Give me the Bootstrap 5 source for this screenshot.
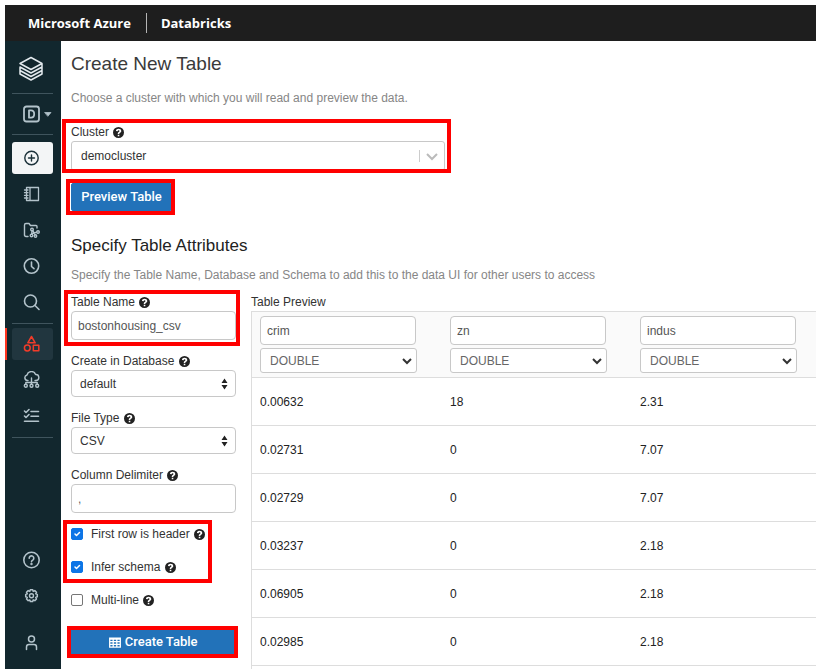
<!DOCTYPE html>
<html lang="en">
<head>
<meta charset="utf-8">
<meta name="viewport" content="width=device-width, initial-scale=1">
<title>Create New Table - Databricks</title>
<link href="https://cdn.jsdelivr.net/npm/bootstrap@5.3.0/dist/css/bootstrap.min.css" rel="stylesheet">
<style>
  body { font-family: "Liberation Sans", Arial, sans-serif; font-size: 12px; line-height: 16px; color: #333; background: #fff; }
  .shell { padding: 5px 5px 3px; }
  .topbar { background: #1e1e1e; height: 36px; padding-left: 23px; font: 700 13px/20px "Open Sans", sans-serif; }
  .topbar a { color: #fff; }
  .topbar .vr { width: 1px; height: 20px; margin: 0 14px 0 15px; opacity: 1; color: #b5b5b5; align-self: center; }

  .rail { width: 56px; background: #12272e; color: #b3c3cb; padding: 8px 7px 10px; gap: 4px; }
  .rail a { color: inherit; height: 32px; width: 41px; padding-right: 2px; border-radius: 3px; flex-shrink: 0; }
  .rail .brand { height: 39px; width: 38px; padding: 0; color: #e3eaee; }
  .rail .persona { height: 31px; padding: 0; }
  .rail .rule { width: 41px; margin: 1px 0 0; border-top: 1px solid #3f545d; opacity: 1; }
  .rail .rule-wide { margin-bottom: 3px; }
  .rail .create { background: #f3f5f6; color: #1b3139; }
  .rail .current { background: #21363f; color: #f23c2a; position: relative; }
  .rail .current::before { content: ""; position: absolute; left: -7px; top: 0; bottom: 0; width: 2px; background: #ff3621; }
  .rail .person { margin-top: 11px; }
  .rail svg { fill: none; stroke: currentColor; stroke-width: 1.4; stroke-linejoin: round; stroke-linecap: round; }

  .page { padding: 11px 0 0 10px; }
  h1 { font-size: 19px; line-height: 24px; font-weight: 400; margin: 0 0 13px; color: #3a3a3a; }
  h2 { font-size: 17px; line-height: 22px; font-weight: 400; margin: 0 0 9px; color: #222; }
  .hint { color: #868686; line-height: 18px; margin: 0; }
  label { display: block; line-height: 16px; margin-bottom: 1px; }
  .q { width: 11px; height: 11px; margin-left: 1px; vertical-align: -2px; fill: #222; }

  .form-control, .form-select { font-size: 12px; line-height: 16px; border-color: #c8c8c8; border-radius: 4px; color: #555; }
  .form-control { height: 29px; padding: 4px 6px; }
  .form-select { height: 27px; padding: 4px 24px 4px 8px; color: #333; background-size: 9px 12px; background-position: right 6px center; }
  .updown { --bs-form-select-bg-img: url("data:image/svg+xml,%3Csvg xmlns='http://www.w3.org/2000/svg' viewBox='0 0 9 12'%3E%3Cpath fill='%23222' d='M4.500 .5 7.500 5h-6zM4.500 11.500 7.500 7h-6z'/%3E%3C/svg%3E"); }
  .cluster { height: 30px; padding: 3px 30px 4px 9px; border-radius: 3px; background-size: 22px 14px; background-position: right 4px center;
    --bs-form-select-bg-img: url("data:image/svg+xml,%3Csvg xmlns='http://www.w3.org/2000/svg' viewBox='0 0 22 14'%3E%3Cpath fill='none' stroke='%23ccc' d='M1.500 1v12'/%3E%3Cpath fill='none' stroke='%23bbb' stroke-width='2' d='m9 5 5 5 5-5'/%3E%3C/svg%3E"); }
  .cluster-field { width: 374px; max-width: 100%; margin-top: 17px; }
  .btn-azure { --bs-btn-bg: #2272b9; --bs-btn-color: #fff; --bs-btn-hover-bg: #1b609e; --bs-btn-hover-color: #fff; --bs-btn-border-color: #2272b9;
    --bs-btn-font-size: 13px; --bs-btn-line-height: 16px; --bs-btn-border-radius: 2px; --bs-btn-font-weight: 500; --bs-btn-padding-y: 5px; --bs-btn-padding-x: 0; --bs-btn-font-family: Roboto, Arial, sans-serif; }
  .preview { margin-top: 12px; width: 101px; }

  .boxed { position: relative; }
  .boxed::after { content: ""; position: absolute; border: 4px solid #f00; pointer-events: none; inset: -4px -4px -6px -7px; }
  .boxed-cluster::after { inset: -5px -6px -2px -9px; }
  .boxed-button::after { inset: -4px -3px -4px -5px; }
  .boxed-checks::after { inset: -6px 24px -8px -8px; }

  .attrs { width: 165px; flex-shrink: 0; gap: 13px; }
  .attrs-row { padding-top: 10px; }
  .checks { gap: 17px; }
  .tick { display: flex; align-items: center; gap: 8px; min-height: 0; margin: 0; padding: 0; }
  .tick .form-check-input { width: 12px; height: 12px; margin: 0; float: none; border-color: #767676; border-radius: 2px; }
  .tick .form-check-input:checked { background-color: #0d75e6; border-color: #0d75e6; }
  .tick label { margin: 0; }
  .make { margin-top: 7px; }
  .make::after { inset: -2px -2px -2px -4px; }

  .grid { min-width: 0; margin-left: 15px; }
  .caption-line { margin-bottom: 1px; }
  .sheet { border-left: 1px solid #ddd; }
  .samples { width: 100%; table-layout: fixed; color: #222; }
  .samples th { width: 190px; font-weight: 400; background: #fafafa; border-top: 1px solid #ddd; padding: 4px 0 4px 8px; }
  .samples th:last-child { width: auto; }
  .samples tr { border-bottom: 1px solid #ddd; }
  .samples td { padding: 16px 0 15px 8px; }
  .samples .form-control { width: 156px; margin-bottom: 3px; }
  .samples .form-select { width: 157px; height: 25px; padding: 3px 20px 3px 9px; color: #666; border-radius: 3px; background-size: 10px 8px; background-position: right 4px center;
    --bs-form-select-bg-img: url("data:image/svg+xml,%3Csvg xmlns='http://www.w3.org/2000/svg' viewBox='0 0 10 8'%3E%3Cpath fill='none' stroke='%23333' stroke-width='2' d='m1 2 4 4 4-4'/%3E%3C/svg%3E"); }
</style>
</head>
<body>
<svg class="d-none" aria-hidden="true">
  <symbol id="q" viewBox="0 0 16 16"><path fill-rule="evenodd" d="M8 0a8 8 0 1 0 0 16A8 8 0 0 0 8 0zM6.900 11.200h2.300v2.200H6.900zM4.300 5.800C4.400 3.700 5.900 2.600 8.100 2.600c2.200 0 3.900 1.200 3.900 3.100 0 1.500-.9 2.200-1.800 2.800-.8.500-1 .8-1 1.700H6.900c0-1.600.5-2.300 1.500-3 .7-.4 1-.7 1-1.300 0-.6-.5-1-1.200-1-.9 0-1.300.4-1.400 1.200z"/></symbol>
</svg>
<div class="shell d-flex flex-column min-vh-100">
  <header class="topbar d-flex align-items-center">
    <a class="text-decoration-none" href="#">Microsoft Azure</a><span class="vr"></span><a class="text-decoration-none" href="#">Databricks</a>
  </header>
  <div class="d-flex flex-grow-1">
    <nav class="rail d-flex flex-column flex-shrink-0" aria-label="Main">
      <a class="brand d-flex align-items-center justify-content-center" href="#" aria-label="Home"><svg width="26" height="26" viewBox="0 0 26 26"><path d="M2 7.500 13 1.500l11 6-11 6zM24 7.500v3.500l-11 6-11-6M2 11v3.500l11 6 11-6M24 14.500V18l-11 6-11-6v-3.500M24 11v3.500" stroke-width="1.500"/></svg></a>
      <hr class="rule">
      <a class="persona d-flex align-items-center justify-content-end" href="#" aria-label="Persona"><svg width="32" height="18" viewBox="0 0 32 18"><rect x="3" y="1.500" width="15" height="15" rx="2.500" stroke-width="1.800"/><path d="M8 5.300h2q3.200 0 3.200 3.700T10 12.700H8z" stroke-width="1.800"/><path d="M24 7.500h6L27 11z" fill="currentColor" stroke-width=".8"/></svg></a>
      <hr class="rule rule-wide">
      <a class="create d-flex align-items-center justify-content-center" href="#" aria-label="Create"><svg width="18" height="18" viewBox="0 0 18 18"><circle cx="8.500" cy="9" r="6.700"/><path d="M8.500 6v6M5.500 9h6"/></svg></a>
      <a class="d-flex align-items-center justify-content-center" href="#" aria-label="Workspace"><svg width="18" height="18" viewBox="0 0 18 18"><path d="M3.500 2.500h12v13h-12zM7 2.500v13M1.500 5h3.500M1.500 7.700h3.500M1.500 10.400h3.500M1.500 13h3.500" stroke-width="1.300"/></svg></a>
      <a class="d-flex align-items-center justify-content-center" href="#" aria-label="Repos"><svg width="18" height="18" viewBox="0 0 18 18"><path d="M5 15.500H3q-1.500 0-1.500-1.500V4q0-1.500 1.500-1.500h3l1.500 2h5.500q1 0 1 1V7"/><circle cx="9" cy="8.500" r="1.300"/><circle cx="15" cy="11" r="1.300"/><circle cx="8.500" cy="14.500" r="1.300"/><circle cx="12.500" cy="15" r="1.200"/><path d="M9 9.800l-.3 3.400M9.800 9.500l2.400 4.300M9.500 12.500l4.200-1.300"/></svg></a>
      <a class="d-flex align-items-center justify-content-center" href="#" aria-label="Recents"><svg width="18" height="18" viewBox="0 0 18 18"><circle cx="8.500" cy="9" r="7.200" stroke-width="1.600"/><path d="M8.500 5v4.500l2.500 2.200" stroke-width="1.600"/></svg></a>
      <a class="d-flex align-items-center justify-content-center" href="#" aria-label="Search"><svg width="18" height="18" viewBox="0 0 18 18"><circle cx="7.500" cy="8" r="6" stroke-width="1.600"/><path d="m12 12.500 4 4" stroke-width="1.600"/></svg></a>
      <hr class="rule">
      <a class="current d-flex align-items-center justify-content-center" href="#" aria-label="Data" aria-current="page"><svg width="18" height="18" viewBox="0 0 18 18"><path d="m8.500 1.500 3.700 6.300H4.800zM10.300 10.300h5.500v5.500h-5.500z" stroke-width="1.500"/><circle cx="4.300" cy="13" r="2.900" stroke-width="1.500"/></svg></a>
      <a class="d-flex align-items-center justify-content-center" href="#" aria-label="Compute"><svg width="18" height="18" viewBox="0 0 18 18"><path d="M5 9.500H4.300a2.800 2.800 0 0 1-.3-5.500A4.500 4.500 0 0 1 12.600 3.500a3 3 0 0 1 .4 6H12M8.500 7v6M2.800 13v-1.500h11.400V13"/><circle cx="2.800" cy="14.800" r="1.500"/><circle cx="8.500" cy="14.800" r="1.500"/><circle cx="14.200" cy="14.800" r="1.500"/></svg></a>
      <a class="d-flex align-items-center justify-content-center" href="#" aria-label="Jobs"><svg width="18" height="18" viewBox="0 0 18 18"><path d="m1.500 4 1.500 1.500L6 2.500M1.500 9 3 10.500 6 7.500M8 4.500h7.500M8 9.300h7.500M1.500 14.200h14" stroke-width="1.600"/></svg></a>
      <hr class="rule">
      <a class="d-flex align-items-center justify-content-center mt-auto" href="#" aria-label="Help"><svg width="18" height="18" viewBox="0 0 18 18"><circle cx="8.500" cy="9" r="7.700" stroke-width="1.600"/><path d="M6.200 7.300a2.300 2.300 0 1 1 3.600 1.800q-1.300.7-1.300 1.700" stroke-width="1.600"/><circle cx="8.500" cy="13" r=".5"/></svg></a>
      <a class="d-flex align-items-center justify-content-center" href="#" aria-label="Settings"><svg width="18" height="18" viewBox="0 0 18 17"><path d="M7.300 2.300h2.400l.5 1.600 1.600-.8 1.700 1.700-.8 1.600 1.600.5v2.400l-1.600.6.8 1.600-1.700 1.700-1.600-.8-.5 1.600H7.300l-.5-1.600-1.600.8-1.700-1.700.8-1.600-1.600-.6V6.900l1.600-.5-.8-1.600 1.700-1.700 1.600.8z" stroke-width="1.500"/><circle cx="8.500" cy="8.200" r="2"/></svg></a>
      <a class="person d-flex align-items-center justify-content-center" href="#" aria-label="Account"><svg width="18" height="18" viewBox="0 0 18 18"><circle cx="8.500" cy="5" r="3" stroke-width="1.500"/><path d="M3.500 15.500V13q0-2.500 2.500-2.500h5q2.500 0 2.500 2.500v2.500" stroke-width="1.500"/></svg></a>
    </nav>
    <main class="page flex-grow-1 overflow-hidden d-flex flex-column">
      <h1>Create New Table</h1>
      <p class="hint">Choose a cluster with which you will read and preview the data.</p>
      <div class="cluster-field boxed boxed-cluster">
        <label for="cluster">Cluster <svg class="q"><use href="#q"/></svg></label>
        <select class="form-select cluster" id="cluster"><option>democluster</option></select>
      </div>
      <div class="preview boxed boxed-button d-flex"><button class="btn btn-azure w-100" type="button">Preview Table</button></div>
      <h2 class="mt-4">Specify Table Attributes</h2>
      <p class="hint">Specify the Table Name, Database and Schema to add this to the data UI for other users to access</p>
      <div class="attrs-row d-flex flex-grow-1">
        <form class="attrs d-flex flex-column">
          <div class="boxed"><label for="tname">Table Name <svg class="q"><use href="#q"/></svg></label><input class="form-control" id="tname" value="bostonhousing_csv"></div>
          <div><label for="db">Create in Database <svg class="q"><use href="#q"/></svg></label><select class="form-select updown" id="db"><option>default</option></select></div>
          <div><label for="ftype">File Type <svg class="q"><use href="#q"/></svg></label><select class="form-select updown" id="ftype"><option>CSV</option></select></div>
          <div><label for="delim">Column Delimiter <svg class="q"><use href="#q"/></svg></label><input class="form-control" id="delim" placeholder=","></div>
          <div class="checks d-flex flex-column">
            <div class="checks d-flex flex-column boxed boxed-checks">
              <div class="tick"><input class="form-check-input" type="checkbox" id="hdr" checked><label for="hdr">First row is header <svg class="q"><use href="#q"/></svg></label></div>
              <div class="tick"><input class="form-check-input" type="checkbox" id="infer" checked><label for="infer">Infer schema <svg class="q"><use href="#q"/></svg></label></div>
            </div>
            <div class="tick"><input class="form-check-input" type="checkbox" id="multi"><label for="multi">Multi-line <svg class="q"><use href="#q"/></svg></label></div>
          </div>
          <div class="make boxed d-flex"><button class="btn btn-azure w-100" type="button"><svg width="12" height="11" viewBox="0 0 12 11"><path fill="none" stroke="#fff" stroke-width="1.300" d="M.7 1.200h10.600v9H.7zM.7 2h10.600M.7 4.700h10.600M.7 7.400h10.600M4.200 1v9M7.800 1v9"/></svg> Create Table</button></div>
        </form>
        <section class="grid flex-grow-1 d-flex flex-column">
          <div class="caption-line">Table Preview</div>
          <div class="sheet flex-grow-1">
          <table class="samples">
            <thead><tr>
              <th><input class="form-control" aria-label="Column 1 name" value="crim"><select class="form-select" aria-label="Column 1 type"><option>DOUBLE</option></select></th>
              <th><input class="form-control" aria-label="Column 2 name" value="zn"><select class="form-select" aria-label="Column 2 type"><option>DOUBLE</option></select></th>
              <th><input class="form-control" aria-label="Column 3 name" value="indus"><select class="form-select" aria-label="Column 3 type"><option>DOUBLE</option></select></th>
            </tr></thead>
            <tbody>
              <tr><td>0.00632</td><td>18</td><td>2.31</td></tr>
              <tr><td>0.02731</td><td>0</td><td>7.07</td></tr>
              <tr><td>0.02729</td><td>0</td><td>7.07</td></tr>
              <tr><td>0.03237</td><td>0</td><td>2.18</td></tr>
              <tr><td>0.06905</td><td>0</td><td>2.18</td></tr>
              <tr><td>0.02985</td><td>0</td><td>2.18</td></tr>
            </tbody>
          </table>
          </div>
        </section>
      </div>
    </main>
  </div>
</div>
<script src="https://cdn.jsdelivr.net/npm/bootstrap@5.3.0/dist/js/bootstrap.bundle.min.js"></script>
</body>
</html>
